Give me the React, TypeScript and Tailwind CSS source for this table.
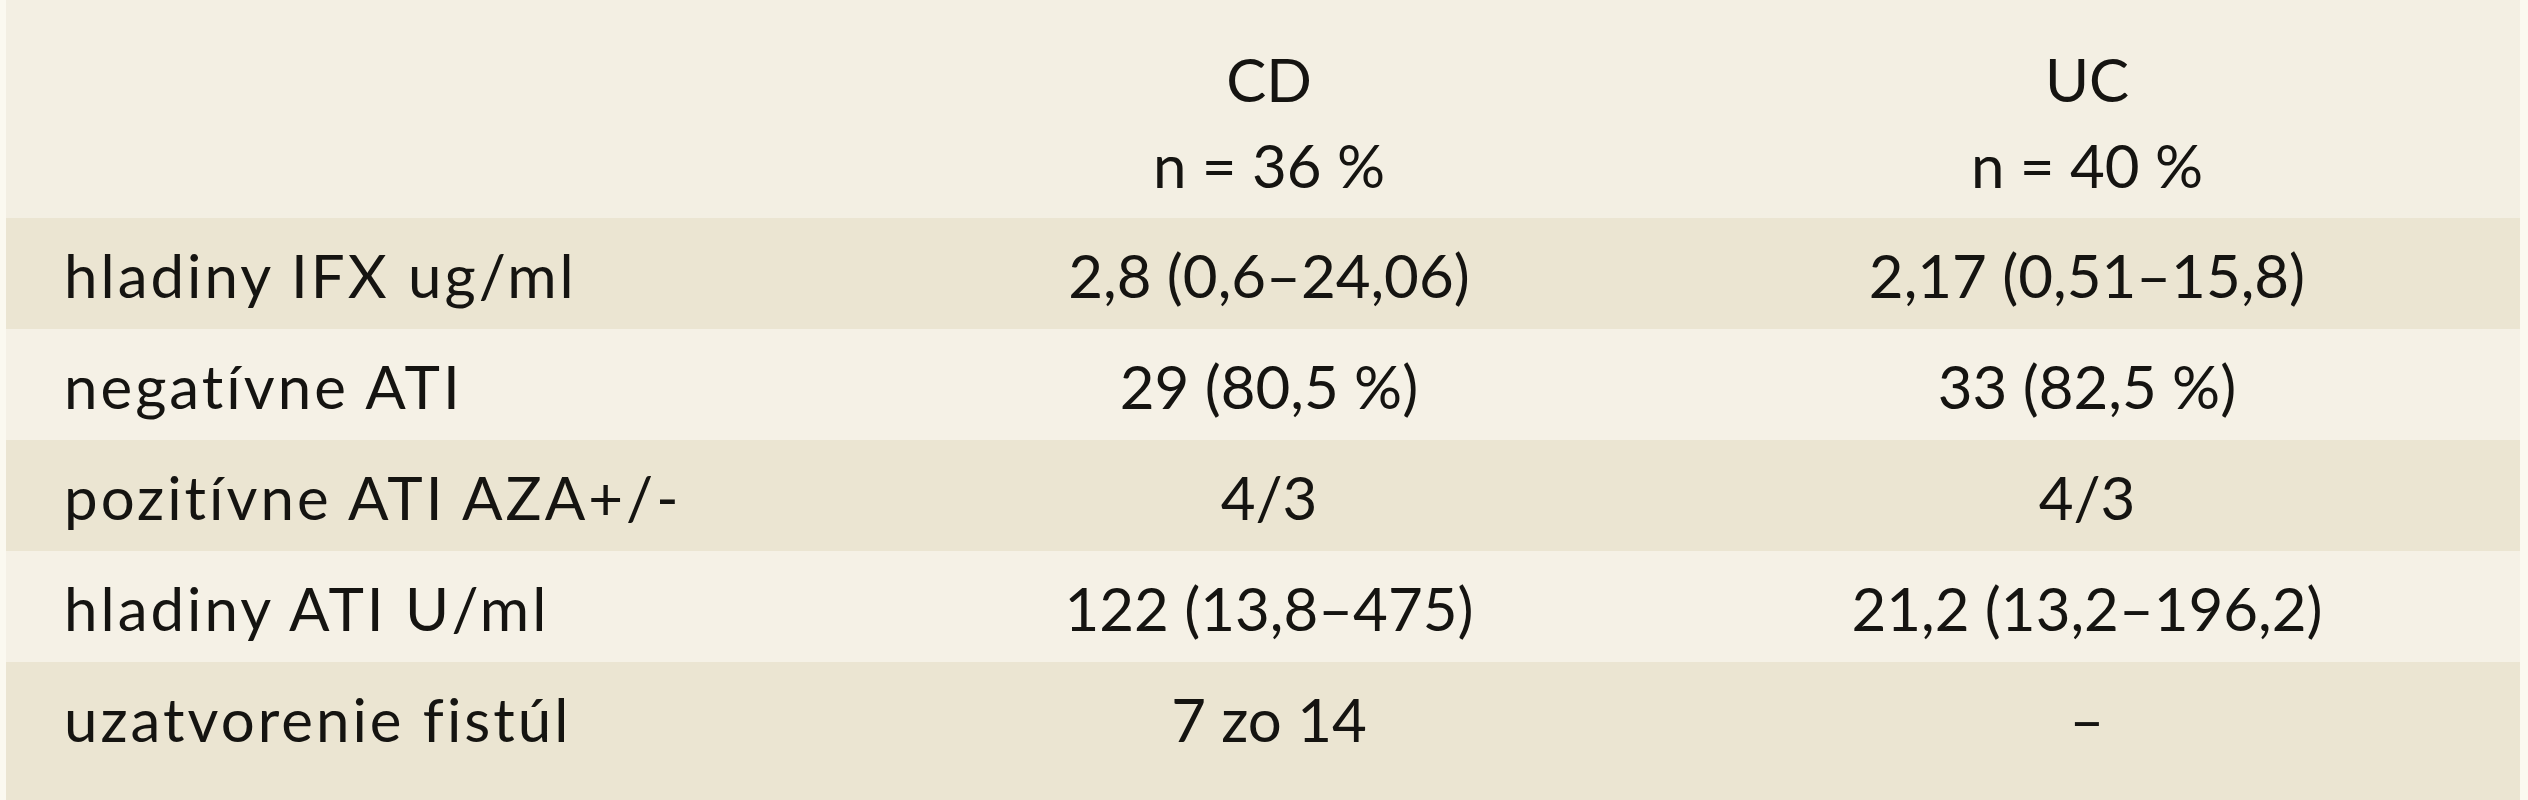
const rows = [
  { label: "hladiny IFX ug/ml", cd: "2,8 (0,6–24,06)", uc: "2,17 (0,51–15,8)", dark: true },
  { label: "negatívne ATI", cd: "29 (80,5 %)", uc: "33 (82,5 %)", dark: false },
  { label: "pozitívne ATI AZA+/-", cd: "4/3", uc: "4/3", dark: true },
  { label: "hladiny ATI U/ml", cd: "122 (13,8–475)", uc: "21,2 (13,2–196,2)", dark: false },
  { label: "uzatvorenie fistúl", cd: "7 zo 14", uc: "–", dark: true },
];

export default function App() {
  return (
    <div
      className="h-[800px] w-[2528px] bg-[#fbf9f0] pl-[6px] pr-[8px] text-[60px] leading-[72px] text-[#151411]"
      style={{ fontFamily: "Lato, 'Open Sans', sans-serif" }}
    >
      <div className="flex h-full flex-col">
        <div className="grid h-[218px] shrink-0 grid-cols-[854px_818px_818px_1fr] bg-[#f3efe3] pt-[36px] leading-[86px]">
          <div />
          <div className="text-center">
            <div>CD</div>
            <div>n = 36 %</div>
          </div>
          <div className="text-center">
            <div>UC</div>
            <div>n = 40 %</div>
          </div>
          <div />
        </div>

        {rows.map((r, i) => (
          <div
            key={r.label}
            className={
              "grid grid-cols-[854px_818px_818px_1fr] pt-[21px] " +
              (r.dark ? "bg-[#ebe5d2] " : "bg-[#f5f1e6] ") +
              (i === rows.length - 1 ? "flex-1" : "h-[111px] shrink-0")
            }
          >
            <div className="pl-[58px] whitespace-nowrap tracking-[3px]">{r.label}</div>
            <div className="text-center whitespace-nowrap">{r.cd}</div>
            <div className="text-center whitespace-nowrap">{r.uc}</div>
            <div />
          </div>
        ))}
      </div>
    </div>
  );
}
